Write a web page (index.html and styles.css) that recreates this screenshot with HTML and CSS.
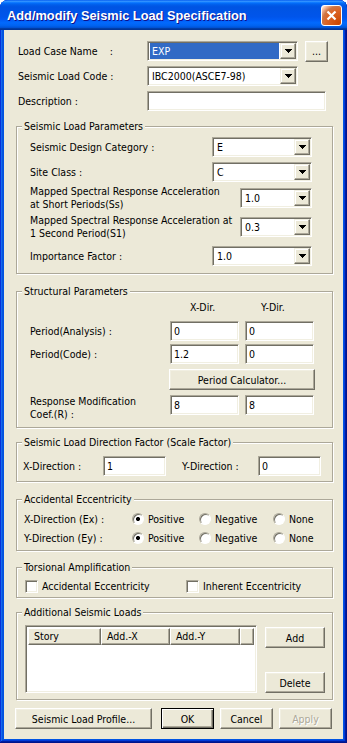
FILE: index.html
```html
<!DOCTYPE html>
<html lang="en">
<head>
  <meta charset="UTF-8">
  <meta name="viewport" content="width=device-width, initial-scale=1.0">
  <title>Add/modify Seismic Load Specification</title>
  <link rel="stylesheet" href="styles.css">
</head>
<body>
  <div class="window">
    <div class="titlebar">
      <span class="title">Add/modify Seismic Load Specification</span>
      <span class="close">
        <svg width="13" height="13" viewBox="0 0 13 13"><path d="M2.5 2.5 L10.5 10.5 M10.5 2.5 L2.5 10.5" stroke="#fff" stroke-width="2.2"/></svg>
      </span>
    </div>

    <div class="dialog">
      <div class="row top-row">
        <span class="lbl w-top">Load Case Name<span class="colon">:</span></span>
        <div class="edit combo w-code"><span class="val picked">EXP</span><span class="drop"><svg width="7" height="4" viewBox="0 0 7 4"><path d="M0 0h7v1h-1v1h-1v1h-1v1h-1v-1h-1v-1h-1v-1h-1z"/></svg></span></div>
        <button class="btn btn-dots">...</button>
      </div>
      <div class="row top-row">
        <span class="lbl w-top">Seismic Load Code :</span>
        <div class="edit combo w-code"><span class="val">IBC2000(ASCE7-98)</span><span class="drop"><svg width="7" height="4" viewBox="0 0 7 4"><path d="M0 0h7v1h-1v1h-1v1h-1v1h-1v-1h-1v-1h-1v-1h-1z"/></svg></span></div>
      </div>
      <div class="row top-row">
        <span class="lbl w-top">Description :</span>
        <div class="edit w-desc"></div>
      </div>

      <!-- Seismic load parameters -->
      <div class="group g-params">
        <div class="legend">Seismic Load Parameters</div>
        <div class="row">
          <span class="lbl w-param">Seismic Design Category :</span>
          <div class="edit combo w-pcombo"><span class="val">E</span><span class="drop"><svg width="7" height="4" viewBox="0 0 7 4"><path d="M0 0h7v1h-1v1h-1v1h-1v1h-1v-1h-1v-1h-1v-1h-1z"/></svg></span></div>
        </div>
        <div class="row gap5">
          <span class="lbl w-param">Site Class :</span>
          <div class="edit combo w-pcombo"><span class="val">C</span><span class="drop"><svg width="7" height="4" viewBox="0 0 7 4"><path d="M0 0h7v1h-1v1h-1v1h-1v1h-1v-1h-1v-1h-1v-1h-1z"/></svg></span></div>
        </div>
        <div class="row tall gap3">
          <span class="lbl w-long">Mapped Spectral Response Acceleration<br>at Short Periods(Ss)</span>
          <div class="edit combo w-scombo"><span class="val">1.0</span><span class="drop"><svg width="7" height="4" viewBox="0 0 7 4"><path d="M0 0h7v1h-1v1h-1v1h-1v1h-1v-1h-1v-1h-1v-1h-1z"/></svg></span></div>
        </div>
        <div class="row tall gap3">
          <span class="lbl w-long">Mapped Spectral Response Acceleration at<br>1 Second Period(S1)</span>
          <div class="edit combo w-scombo"><span class="val">0.3</span><span class="drop"><svg width="7" height="4" viewBox="0 0 7 4"><path d="M0 0h7v1h-1v1h-1v1h-1v1h-1v-1h-1v-1h-1v-1h-1z"/></svg></span></div>
        </div>
        <div class="row gap6">
          <span class="lbl w-param">Importance Factor :</span>
          <div class="edit combo w-pcombo"><span class="val">1.0</span><span class="drop"><svg width="7" height="4" viewBox="0 0 7 4"><path d="M0 0h7v1h-1v1h-1v1h-1v1h-1v-1h-1v-1h-1v-1h-1z"/></svg></span></div>
        </div>
      </div>

      <!-- Structural parameters -->
      <div class="group g-struct">
        <div class="legend">Structural Parameters</div>
        <div class="dir-head">
          <span class="dir-x">X-Dir.</span>
          <span>Y-Dir.</span>
        </div>
        <div class="row">
          <span class="lbl w-struct">Period(Analysis) :</span>
          <div class="edit w-num">0</div>
          <div class="edit w-num">0</div>
        </div>
        <div class="row gap3">
          <span class="lbl w-struct">Period(Code) :</span>
          <div class="edit w-num">1.2</div>
          <div class="edit w-num">0</div>
        </div>
        <div class="calc-row">
          <button class="btn btn-calc">Period Calculator...</button>
        </div>
        <div class="row resp-row">
          <span class="lbl w-struct">Response Modification<br>Coef.(R) :</span>
          <div class="edit w-num">8</div>
          <div class="edit w-num">8</div>
        </div>
      </div>

      <!-- Direction factor -->
      <div class="group g-scale">
        <div class="legend">Seismic Load Direction Factor (Scale Factor)</div>
        <div class="row">
          <span class="lbl w-sx">X-Direction :</span>
          <div class="edit w-scale">1</div>
          <span class="lbl w-sy">Y-Direction :</span>
          <div class="edit w-scale">0</div>
        </div>
      </div>

      <!-- Accidental eccentricity -->
      <div class="group g-ecc">
        <div class="legend">Accidental Eccentricity</div>
        <div class="row opt-row">
          <span class="lbl w-ecc">X-Direction (Ex) :</span>
          <span class="opt w-opt1"><span class="radio on"></span>Positive</span>
          <span class="opt w-opt2"><span class="radio"></span>Negative</span>
          <span class="opt"><span class="radio"></span>None</span>
        </div>
        <div class="row opt-row gap3">
          <span class="lbl w-ecc">Y-Direction (Ey) :</span>
          <span class="opt w-opt1"><span class="radio on"></span>Positive</span>
          <span class="opt w-opt2"><span class="radio"></span>Negative</span>
          <span class="opt"><span class="radio"></span>None</span>
        </div>
      </div>

      <!-- Torsional amplification -->
      <div class="group g-tors">
        <div class="legend">Torsional Amplification</div>
        <div class="row opt-row">
          <span class="opt w-chk"><span class="check"></span>Accidental Eccentricity</span>
          <span class="opt"><span class="check"></span>Inherent Eccentricity</span>
        </div>
      </div>

      <!-- Additional loads -->
      <div class="group g-add">
        <div class="legend">Additional Seismic Loads</div>
        <div class="add-body">
          <div class="list">
            <div class="list-head">
              <span class="col c-story">Story</span>
              <span class="col c-x">Add.-X</span>
              <span class="col c-y">Add.-Y</span>
              <span class="col c-rest"></span>
            </div>
          </div>
          <div class="add-btns">
            <button class="btn btn-side">Add</button>
            <button class="btn btn-side">Delete</button>
          </div>
        </div>
      </div>

      <div class="footer">
        <button class="btn btn-profile">Seismic Load Profile...</button>
        <button class="btn btn-small btn-default">OK</button>
        <button class="btn btn-small">Cancel</button>
        <button class="btn btn-small" disabled>Apply</button>
      </div>
    </div>
  </div>
</body>
</html>
```

FILE: styles.css
```css
body {
  margin: 0;
  background: #fff;
  font-family: "DejaVu Sans Condensed", "Liberation Sans", sans-serif;
  font-size: 10.5px;
  color: #000;
}
.window {
  width: 347px;
  height: 743px;
  display: flex;
  flex-direction: column;
  background: #0054e3;
  border-radius: 8px 8px 0 0;
  box-shadow: inset -1px -1px #00138c, inset 1px 1px #0831d9, inset -2px -2px #001ea0, inset 2px 2px #166aee, inset -3px -3px #003bda, inset 3px 3px #0855dd;
}
.titlebar {
  height: 30px;
  flex: none;
  display: flex;
  align-items: center;
  justify-content: space-between;
  padding: 0 5px 0 7px;
  border-radius: 8px 8px 0 0;
  background: linear-gradient(to bottom, #0058ee 0%, #3593ff 4%, #288eff 6%, #127dff 8%, #036ffc 10%, #0262ee 14%, #0057e5 20%, #0054e3 24%, #0055eb 56%, #005bf5 66%, #026afe 76%, #0062ef 86%, #0052d6 92%, #0040ab 94%, #003092 100%);
}
.title {
  font-family: "Liberation Sans", sans-serif;
  font-weight: bold;
  font-size: 12.8px;
  color: #fff;
  text-shadow: 1px 1px #0f1089;
}
.close {
  width: 21px;
  height: 21px;
  box-sizing: border-box;
  border: 1px solid #fff;
  border-radius: 3px;
  display: flex;
  align-items: center;
  justify-content: center;
  background: radial-gradient(circle at 90% 90%, #cc4600 0%, #dc6527 55%, #cd7546 70%, #ffccb2 90%, #fff 100%);
}
.dialog {
  flex: 1;
  margin: 0 4px 4px;
  padding-top: 11px;
  background: #ece9d8;
}

/* rows and labels */
.row {
  display: flex;
  align-items: center;
  height: 20px;
}
.row.tall { height: 26px; }
.gap3 { margin-top: 3px; }
.gap5 { margin-top: 5px; }
.gap6 { margin-top: 6px; }
.top-row { margin-left: 14px; }
.top-row + .top-row { margin-top: 5px; }
.lbl {
  flex: none;
  line-height: 13px;
  white-space: nowrap;
}
.colon { margin-left: 12px; }
.w-top { width: 129px; }
.w-param { width: 182px; }
.w-long { width: 210px; }
.w-struct { width: 140px; }
.w-sx { width: 80px; }
.w-sy { width: 76px; margin-left: 16px; }
.w-ecc { width: 108px; }

/* sunken edit box */
.edit {
  flex: none;
  box-sizing: border-box;
  height: 20px;
  background: #fff;
  border: 1px solid;
  border-color: #aca899 #fff #fff #aca899;
  box-shadow: inset 1px 1px #716f64, inset -1px -1px #f1efe2;
  padding: 0 3px;
  display: flex;
  align-items: center;
  white-space: nowrap;
}
.combo {
  padding: 1px;
}
.combo .val {
  flex: 1;
  height: 16px;
  line-height: 16px;
  padding-left: 2px;
  margin-left: 1px;
}
.combo .val.picked {
  background: #316ac5;
  color: #fff;
  margin-right: 1px;
}
.drop {
  flex: none;
  box-sizing: border-box;
  width: 16px;
  height: 16px;
  background: #ece9d8;
  border: 1px solid;
  border-color: #f1efe2 #716f64 #716f64 #f1efe2;
  box-shadow: inset -1px -1px #aca899, inset 1px 1px #fff;
  display: flex;
  align-items: center;
  justify-content: center;
}
.w-code { width: 151px; }
.w-desc { width: 179px; }
.w-pcombo { width: 100px; }
.w-scombo { width: 72px; }
.w-num { width: 69px; }
.w-num + .w-num { margin-left: 6px; }
.w-scale { width: 63px; }

/* raised buttons */
.btn {
  flex: none;
  box-sizing: border-box;
  height: 21px;
  padding: 0;
  font: inherit;
  color: #000;
  background: #ece9d8;
  border: 1px solid;
  border-color: #fff #716f64 #716f64 #fff;
  box-shadow: inset -1px -1px #aca899, inset 1px 1px #f1efe2;
}
.btn:disabled {
  color: #aca899;
  text-shadow: 1px 1px #fff;
}
.btn-default {
  border-color: #000;
  box-shadow: inset 1px 1px #fff, inset -1px -1px #716f64, inset -2px -2px #aca899;
}
.btn-dots { width: 23px; margin-left: 7px; }

/* group boxes: --pt is the gap under the caption, --pl the left inset */
.group {
  border: 1px solid #aca899;
  box-shadow: 1px 1px #fff, inset 1px 1px #fff;
  margin: 0 10px 0 12px;
  padding-left: var(--pl);
}
.legend {
  display: table;
  margin: -7px 0 var(--pt) calc(5px - var(--pl));
  padding: 0 2px;
  line-height: 13px;
  background: #ece9d8;
}
.g-params { --pt: 4px; --pl: 13px; margin-top: 15px; padding-bottom: 7px; }
.g-struct { --pt: 3px; --pl: 13px; margin-top: 17px; padding-bottom: 6px; }
.g-scale { --pt: 7px; --pl: 6px; margin-top: 14px; padding-bottom: 5px; }
.g-ecc { --pt: 5px; --pl: 7px; margin-top: 17px; padding-bottom: 4px; }
.g-tors { --pt: 4px; --pl: 8px; margin-top: 16px; padding-bottom: 3px; }
.g-add { --pt: 6px; --pl: 8px; margin-top: 14px; padding-bottom: 6px; }

.dir-head {
  display: flex;
  line-height: 13px;
  padding-left: 160px;
  margin-bottom: 7px;
}
.dir-x { width: 71px; }
.calc-row {
  display: flex;
  margin: 5px 0 5px 139px;
}
.btn-calc { width: 146px; }
.resp-row {
  align-items: flex-start;
  height: 26px;
}

/* radios and checks */
.opt-row { height: 16px; }
.opt {
  display: flex;
  align-items: center;
  flex: none;
}
.w-opt1 { width: 67px; }
.w-opt2 { width: 74px; }
.w-chk { width: 161px; }
.radio {
  flex: none;
  box-sizing: border-box;
  width: 12px;
  height: 12px;
  margin-right: 4px;
  border-radius: 50%;
  border: 1px solid;
  border-color: #aca899 #fff #fff #aca899;
  box-shadow: inset 1px 1px #716f64;
  background: #fff;
}
.radio.on {
  background: radial-gradient(circle, #000 0 1.8px, #fff 2.3px);
}
.check {
  flex: none;
  box-sizing: border-box;
  width: 13px;
  height: 13px;
  margin-right: 4px;
  border: 1px solid;
  border-color: #aca899 #fff #fff #aca899;
  box-shadow: inset 1px 1px #716f64, inset -1px -1px #f1efe2;
  background: #fff;
}

/* list view */
.add-body {
  display: flex;
}
.list {
  box-sizing: border-box;
  width: 232px;
  height: 68px;
  padding: 2px;
  background: #fff;
  border: 1px solid;
  border-color: #aca899 #fff #fff #aca899;
  box-shadow: inset 1px 1px #716f64, inset -1px -1px #f1efe2;
}
.list-head {
  display: flex;
  height: 17px;
}
.col {
  box-sizing: border-box;
  height: 17px;
  line-height: 15px;
  padding-left: 5px;
  background: #ece9d8;
  border: 1px solid;
  border-color: #fff #716f64 #716f64 #fff;
  box-shadow: inset -1px -1px #aca899;
}
.c-story { width: 73px; }
.c-x { width: 69px; }
.c-y { width: 70px; }
.c-rest { flex: 1; }
.add-btns {
  display: flex;
  flex-direction: column;
  justify-content: space-between;
  height: 66px;
  margin: 2px 0 0 8px;
}
.btn-side { width: 60px; }

/* dialog buttons */
.footer {
  display: flex;
  margin: 8px 0 0 11px;
}
.btn-profile { width: 137px; margin-right: 9px; }
.btn-small { width: 53px; }
.btn-small + .btn-small { margin-left: 6px; }
```
